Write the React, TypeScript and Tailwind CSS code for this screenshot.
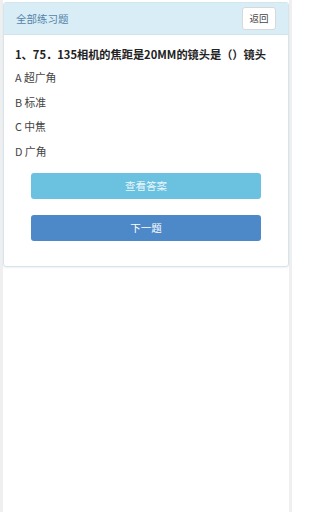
import React from "react";

export default function App() {
  const font = { fontFamily: '"Noto Sans CJK SC", "Open Sans", sans-serif' };
  return (
    <div className="min-h-[512px] w-[292px] bg-[#efefef] px-[3px]" style={font}>
      <div className="min-h-[512px] bg-white pt-[2px]">
        <div className="rounded-[3px] border border-[#d3e6ee] bg-white shadow-[0_1px_2px_rgba(0,0,0,0.06)]">
          <div className="flex h-[32px] items-center justify-between bg-[#d9edf7] pl-[12px] pr-[12px] border-b border-[#cfe4ee]">
            <span className="text-[10.5px] text-[#5584a8]">全部练习题</span>
            <button className="flex h-[23px] w-[34px] items-center justify-center rounded-[3px] border border-[#d8d8d8] bg-white text-[9.5px] text-[#444]">
              返回
            </button>
          </div>
          <div className="px-[11px] pt-[11px] pb-[25px]">
            <div className="text-[11.2px] font-bold leading-[16px] text-[#222] whitespace-nowrap">
              1、75．135相机的焦距是20MM的镜头是（）镜头
            </div>
            <div className="mt-[7px] flex flex-col gap-[8.5px] text-[10.8px] leading-[16px] text-[#444]">
              <div>A 超广角</div>
              <div>B 标准</div>
              <div>C 中焦</div>
              <div>D 广角</div>
            </div>
            <div className="mt-[14px] flex flex-col gap-[16px] px-[16px]">
              <button className="h-[26px] w-full rounded-[3px] bg-[#6bc1e0] text-[10.5px] text-[#eaf6fb]">
                查看答案
              </button>
              <button className="h-[26px] w-full rounded-[3px] bg-[#4d88c8] text-[10.5px] text-white">
                下一题
              </button>
            </div>
          </div>
        </div>
      </div>
    </div>
  );
}
